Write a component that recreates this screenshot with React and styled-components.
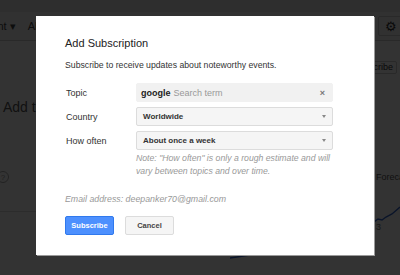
import styled, { createGlobalStyle } from "styled-components";

const Global = createGlobalStyle`
  html, body {
    margin: 0;
    padding: 0;
    background: #333;
  }
  body {
    font-family: "Liberation Sans", Arial, sans-serif;
  }
`;

const Screen = styled.div`
  position: relative;
  width: 400px;
  height: 275px;
  overflow: hidden;
  background: #fff;
`;

/* the Trends page behind the modal */
const Page = styled.div`
  display: flex;
  flex-direction: column;
  height: 100%;
  color: #222;
  font-size: 11px;
`;

const TopBar = styled.div`
  height: 12px;
  background: #e4e4e4;
`;

const Toolbar = styled.div`
  display: flex;
  align-items: center;
  height: 28px;
  gap: 12px;
  border-bottom: 1px solid #ccc;
  background: #f6f6f6;
  margin-left: -30px;
  margin-right: -4px;
`;

const ToolItem = styled.span`
  font-size: 11px;
  color: #444;
  white-space: nowrap;
`;

const GearBox = styled.div`
  margin-left: auto;
  width: 24px;
  height: 18px;
  border: 1px solid #ccc;
  border-radius: 2px;
  display: flex;
  align-items: center;
  justify-content: center;
  color: #333;
  font-size: 13px;
`;

const Body = styled.div`
  flex: 1;
  display: flex;
`;

const LeftPane = styled.div`
  width: 230px;
  flex-shrink: 0;
  box-sizing: border-box;
  padding: 58px 0 0 3px;
  display: flex;
  flex-direction: column;
`;

const Heading = styled.div`
  font-size: 14px;
  color: #555;
  white-space: nowrap;
`;

const Help = styled.span`
  margin: 56px 0 0 -6px;
  width: 10px;
  height: 10px;
  border: 1px solid #aaa;
  border-radius: 50%;
  font-size: 8px;
  color: #999;
  display: flex;
  align-items: center;
  justify-content: center;
`;

const Rule = styled.div`
  margin: 28px 0 0 -3px;
  width: 40px;
  border-top: 1px solid #ddd;
`;

const RightPane = styled.div`
  flex: 1;
  display: flex;
  flex-direction: column;
  padding-top: 20px;
`;

const ActionRow = styled.div`
  display: flex;
  justify-content: flex-end;
  gap: 3px;
  margin-right: -21px;
`;

const GhostButton = styled.div`
  height: 11px;
  padding: 0 3px;
  border: 1px solid #ccc;
  border-radius: 2px;
  font-size: 9px;
  line-height: 11px;
  color: #333;
  white-space: nowrap;
`;

const Forecast = styled.div`
  margin-top: 98px;
  padding-left: 146px;
  font-size: 9px;
  color: #555;
  white-space: nowrap;
`;

const Chart = styled.svg`
  display: block;
  margin-top: 18px;
`;

const Overlay = styled.div`
  position: absolute;
  inset: 0;
  background: rgba(0, 0, 0, 0.8);
  padding: 16px 0 0 36px;
`;

const Dialog = styled.div`
  width: 338px;
  height: 239px;
  box-sizing: border-box;
  background: #fff;
  box-shadow: 1px 1px 0 #9a9a9a;
  padding: 19px 29px 0 29px;
  display: flex;
  flex-direction: column;
  align-items: flex-start;
`;

const Title = styled.div`
  font-size: 11px;
  line-height: 16px;
  color: #222;
`;

const Lead = styled.div`
  margin-top: 8px;
  font-size: 8.7px;
  line-height: 12px;
  color: #333;
`;

const Form = styled.div`
  margin-top: 12px;
  display: grid;
  grid-template-columns: 71px 197px;
  row-gap: 5px;
`;

const Label = styled.div`
  font-size: 9px;
  color: #333;
  align-self: center;
  padding-left: 1px;
`;

const Field = styled.div`
  height: 19px;
  box-sizing: border-box;
  display: flex;
  align-items: center;
  padding: 0 6px 0 ${(p) => (p.$plain ? 4 : 6)}px;
  background: ${(p) => (p.$plain ? "#f1f1f1" : "#f5f5f5")};
  border: 1px solid ${(p) => (p.$plain ? "#f1f1f1" : "#dcdcdc")};
  border-radius: 2px;
`;

const Term = styled.span`
  font-size: 9px;
  font-weight: bold;
  color: #222;
`;

const Placeholder = styled.span`
  font-size: 9px;
  color: #999;
  margin-left: 3px;
  flex: 1;
`;

const Clear = styled.span`
  font-size: 9px;
  font-weight: bold;
  color: #777;
  margin-right: 1px;
`;

const Choice = styled.span`
  flex: 1;
  font-size: 8px;
  font-weight: bold;
  color: #333;
`;

const Caret = styled.span`
  width: 0;
  height: 0;
  border-left: 2.5px solid transparent;
  border-right: 2.5px solid transparent;
  border-top: 3px solid #888;
`;

const Note = styled.div`
  grid-column: 2;
  margin-top: -3px;
  font-size: 8.7px;
  line-height: 13px;
  font-style: italic;
  color: #999;
`;

const Email = styled.div`
  margin-top: 15px;
  font-size: 8.8px;
  line-height: 13px;
  font-style: italic;
  color: #999;
`;

const Buttons = styled.div`
  margin-top: 10px;
  display: flex;
  gap: 11px;
`;

const Button = styled.button`
  width: 49px;
  height: 19px;
  padding: 0;
  border-radius: 2px;
  font-family: inherit;
  font-size: 7.5px;
  font-weight: bold;
  border: 1px solid ${(p) => (p.$primary ? "#3079ed" : "#dcdcdc")};
  background: ${(p) => (p.$primary ? "#4d90fe" : "#f5f5f5")};
  color: ${(p) => (p.$primary ? "#fff" : "#444")};
`;

const App = () => {
  return (
    <Screen>
      <Global />
      <Page>
        <TopBar />
        <Toolbar>
          <ToolItem>Current ▾</ToolItem>
          <ToolItem>All categories ▾</ToolItem>
          <ToolItem>Web Search ▾</ToolItem>
          <GearBox>⚙</GearBox>
        </Toolbar>
        <Body>
          <LeftPane>
            <Heading>Add terms</Heading>
            <Help>?</Help>
            <Rule />
          </LeftPane>
          <RightPane>
            <ActionRow>
              <GhostButton>Subscribe</GhostButton>
              <GhostButton>Share</GhostButton>
            </ActionRow>
            <Forecast>Forecast</Forecast>
            <Chart width="170" height="60" viewBox="0 0 170 60">
              <polyline
                points="0,58 40,52 70,48 100,50 112,46 130,44 144,22 148,19 152,20 156,17 162,14 170,7"
                fill="none"
                stroke="#3366cc"
                strokeWidth="1.4"
              />
              <text x="146" y="30" fontSize="9" fill="#777">
                3
              </text>
            </Chart>
          </RightPane>
        </Body>
      </Page>
      <Overlay>
        <Dialog>
          <Title>Add Subscription</Title>
          <Lead>Subscribe to receive updates about noteworthy events.</Lead>
          <Form>
            <Label>Topic</Label>
            <Field $plain>
              <Term>google</Term>
              <Placeholder>Search term</Placeholder>
              <Clear>×</Clear>
            </Field>
            <Label>Country</Label>
            <Field>
              <Choice>Worldwide</Choice>
              <Caret />
            </Field>
            <Label>How often</Label>
            <Field>
              <Choice>About once a week</Choice>
              <Caret />
            </Field>
            <Note>
              Note: "How often" is only a rough estimate and will vary between
              topics and over time.
            </Note>
          </Form>
          <Email>Email address: deepanker70@gmail.com</Email>
          <Buttons>
            <Button $primary>Subscribe</Button>
            <Button>Cancel</Button>
          </Buttons>
        </Dialog>
      </Overlay>
    </Screen>
  );
};

export default App;
